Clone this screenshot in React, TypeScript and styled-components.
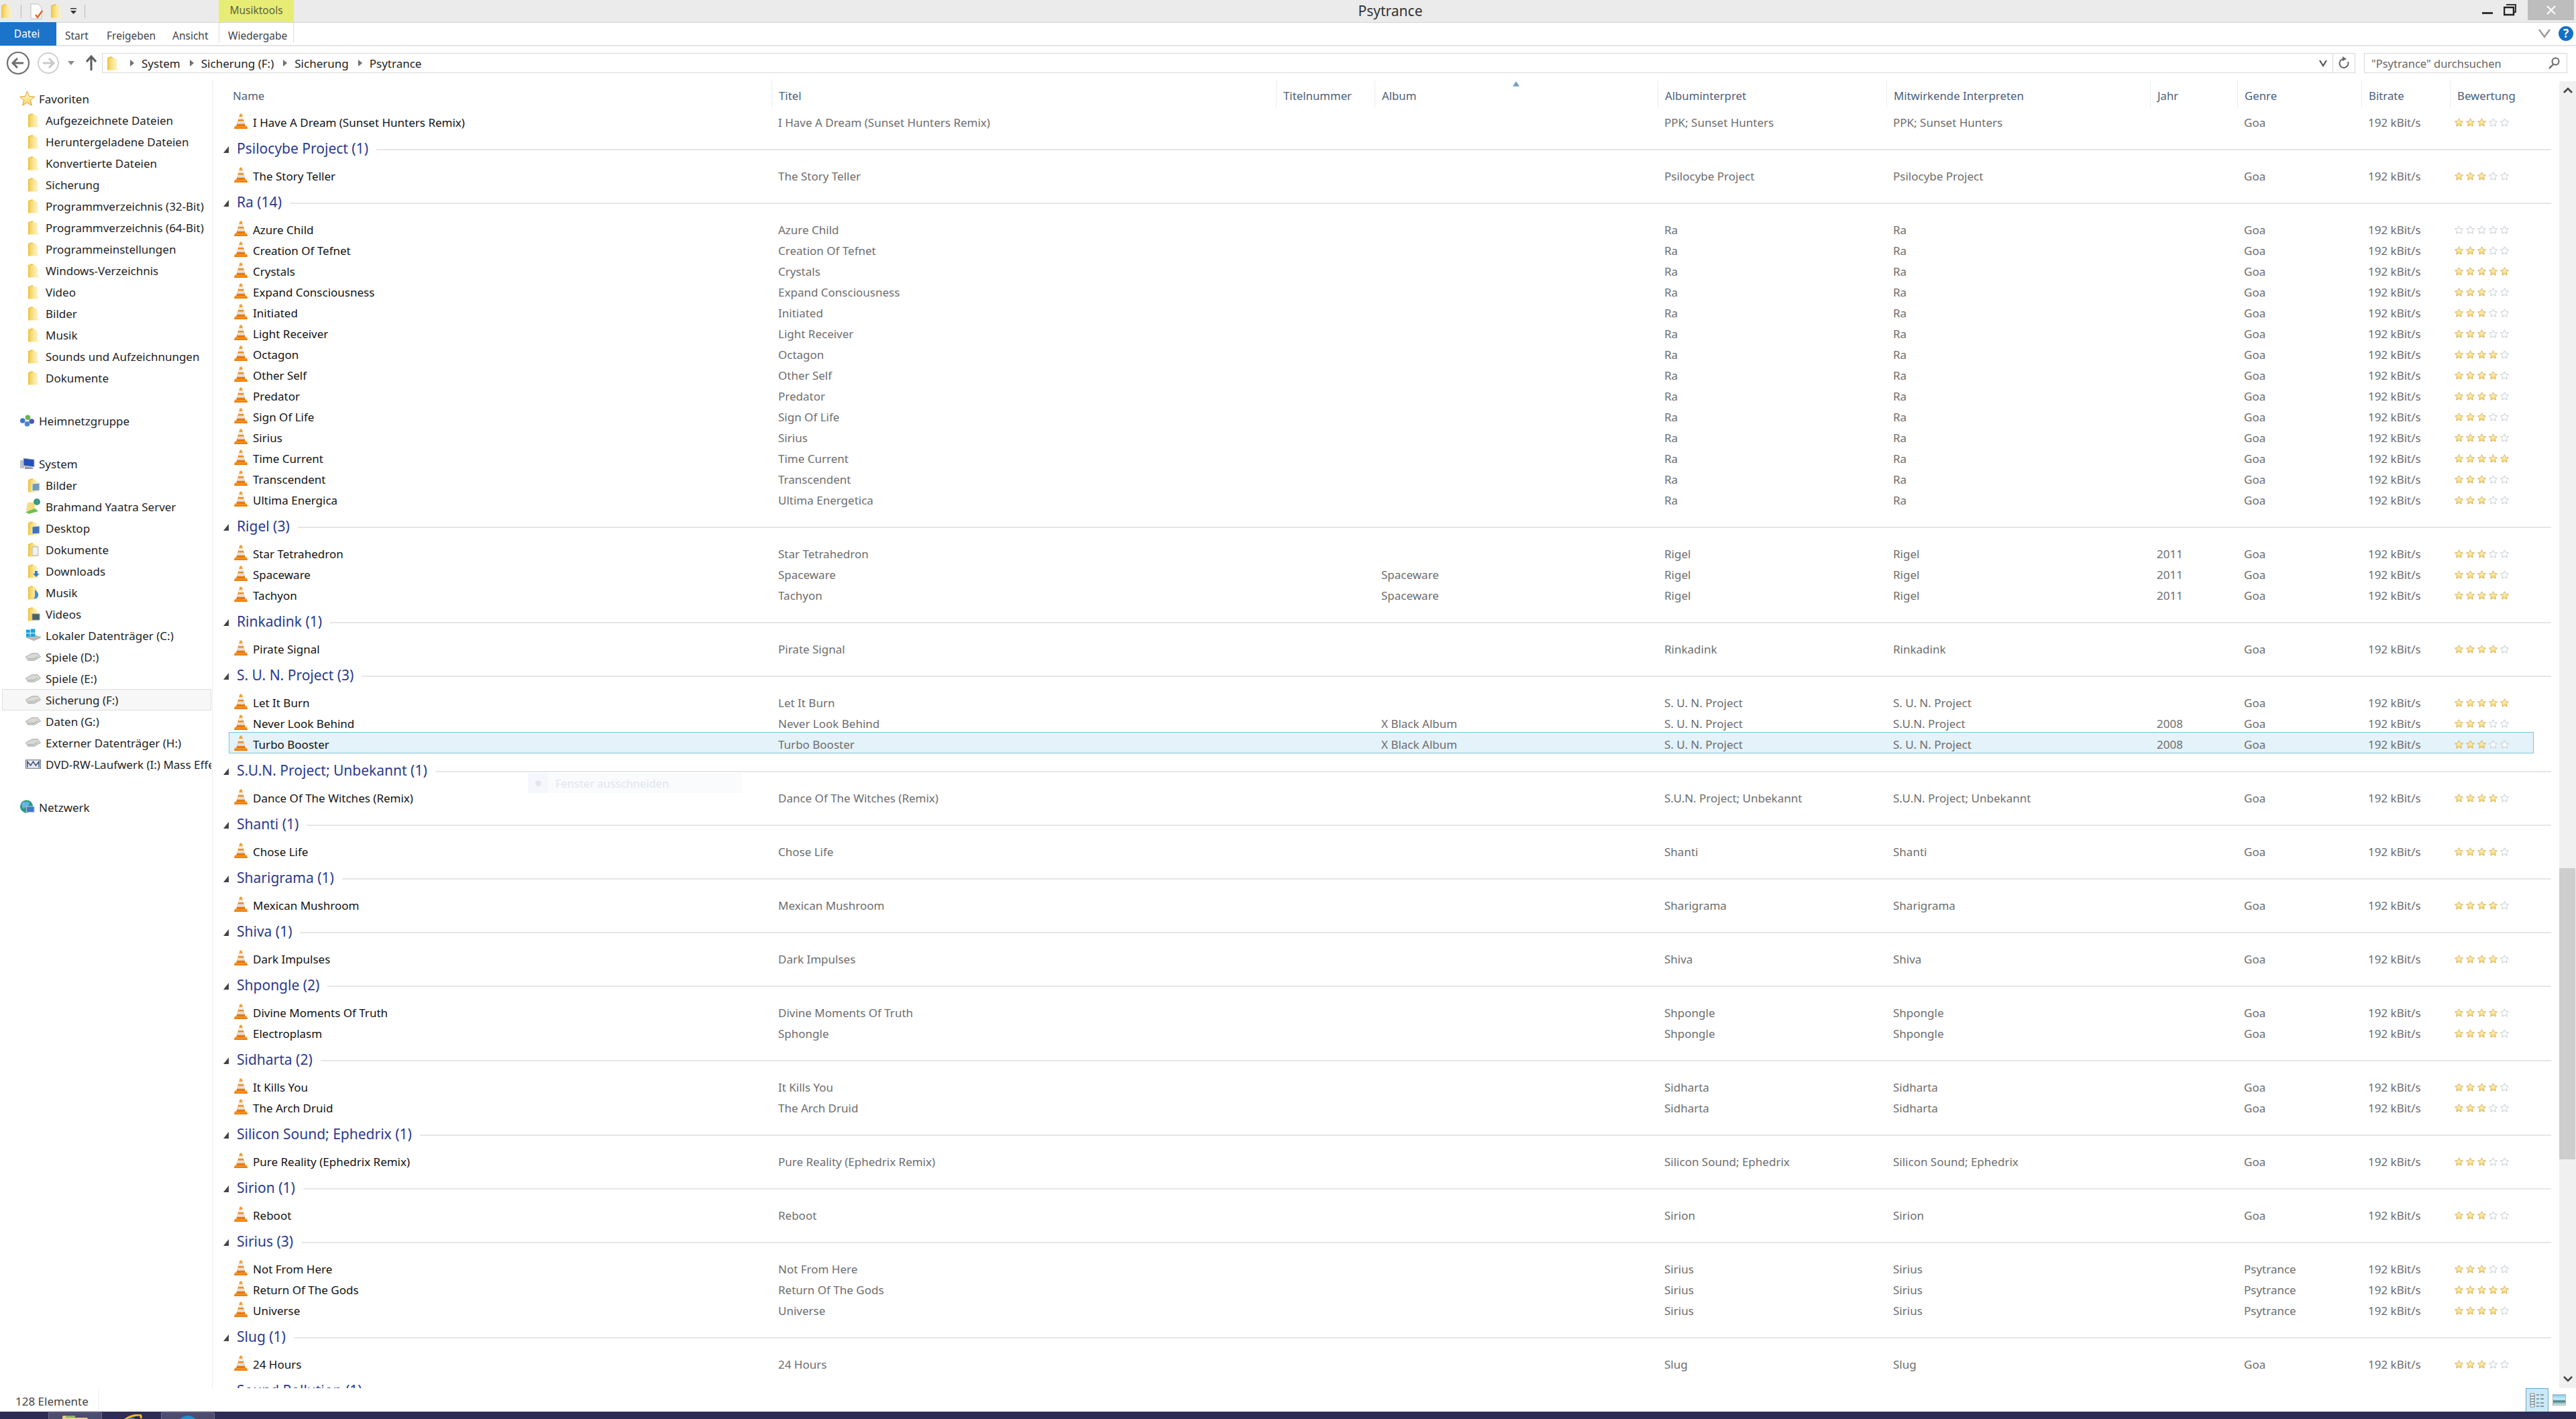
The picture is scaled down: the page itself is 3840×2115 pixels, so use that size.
import React from "react";
import styled, { createGlobalStyle } from "styled-components";

type Track = {
  name: string;
  title?: string;
  album?: string;
  artist: string;
  contrib?: string;
  year?: string;
  genre?: string;
  rating: number;
};
type Group = { label?: string; tracks: Track[] };

const t = (name: string, artist: string, rating: number, extra: Partial<Track> = {}): Track => ({
  name,
  artist,
  rating,
  ...extra,
});

const GROUPS: Group[] = [
  { tracks: [t("I Have A Dream (Sunset Hunters Remix)", "PPK; Sunset Hunters", 3)] },
  { label: "Psilocybe Project (1)", tracks: [t("The Story Teller", "Psilocybe Project", 3)] },
  {
    label: "Ra (14)",
    tracks: [
      t("Azure Child", "Ra", 0),
      t("Creation Of Tefnet", "Ra", 3),
      t("Crystals", "Ra", 5),
      t("Expand Consciousness", "Ra", 3),
      t("Initiated", "Ra", 3),
      t("Light Receiver", "Ra", 3),
      t("Octagon", "Ra", 4),
      t("Other Self", "Ra", 4),
      t("Predator", "Ra", 4),
      t("Sign Of Life", "Ra", 3),
      t("Sirius", "Ra", 4),
      t("Time Current", "Ra", 5),
      t("Transcendent", "Ra", 3),
      t("Ultima Energica", "Ra", 3, { title: "Ultima Energetica" }),
    ],
  },
  {
    label: "Rigel (3)",
    tracks: [
      t("Star Tetrahedron", "Rigel", 3, { year: "2011" }),
      t("Spaceware", "Rigel", 4, { year: "2011", album: "Spaceware" }),
      t("Tachyon", "Rigel", 5, { year: "2011", album: "Spaceware" }),
    ],
  },
  { label: "Rinkadink (1)", tracks: [t("Pirate Signal", "Rinkadink", 4)] },
  {
    label: "S. U. N. Project (3)",
    tracks: [
      t("Let It Burn", "S. U. N. Project", 5),
      t("Never Look Behind", "S. U. N. Project", 3, {
        contrib: "S.U.N. Project",
        album: "X Black Album",
        year: "2008",
      }),
      t("Turbo Booster", "S. U. N. Project", 3, { album: "X Black Album", year: "2008" }),
    ],
  },
  {
    label: "S.U.N. Project; Unbekannt (1)",
    tracks: [t("Dance Of The Witches (Remix)", "S.U.N. Project; Unbekannt", 4)],
  },
  { label: "Shanti (1)", tracks: [t("Chose Life", "Shanti", 4)] },
  { label: "Sharigrama (1)", tracks: [t("Mexican Mushroom", "Sharigrama", 4)] },
  { label: "Shiva (1)", tracks: [t("Dark Impulses", "Shiva", 4)] },
  {
    label: "Shpongle (2)",
    tracks: [
      t("Divine Moments Of Truth", "Shpongle", 4),
      t("Electroplasm", "Shpongle", 4, { title: "Sphongle" }),
    ],
  },
  {
    label: "Sidharta (2)",
    tracks: [t("It Kills You", "Sidharta", 4), t("The Arch Druid", "Sidharta", 3)],
  },
  {
    label: "Silicon Sound; Ephedrix (1)",
    tracks: [t("Pure Reality (Ephedrix Remix)", "Silicon Sound; Ephedrix", 3)],
  },
  { label: "Sirion (1)", tracks: [t("Reboot", "Sirion", 3)] },
  {
    label: "Sirius (3)",
    tracks: [
      t("Not From Here", "Sirius", 3, { genre: "Psytrance" }),
      t("Return Of The Gods", "Sirius", 5, { genre: "Psytrance" }),
      t("Universe", "Sirius", 4, { genre: "Psytrance" }),
    ],
  },
  { label: "Slug (1)", tracks: [t("24 Hours", "Slug", 3)] },
  { label: "Sound Pollution (1)", tracks: [] },
];

const COLUMNS = ["Name", "Titel", "Titelnummer", "Album", "Albuminterpret", "Mitwirkende Interpreten", "Jahr", "Genre", "Bitrate", "Bewertung"];
const ROW_GRID = "809px 752px 147px 422px 341px 393px 130px 185px 132px 125px";

type IconKind =
  | "folder" | "pictures" | "server" | "desktop" | "docs" | "downloads" | "music" | "videos"
  | "windrive" | "drive" | "dvd" | "star" | "homegroup" | "computer" | "network";

const FAVORITES = [
  "Aufgezeichnete Dateien",
  "Heruntergeladene Dateien",
  "Konvertierte Dateien",
  "Sicherung",
  "Programmverzeichnis (32-Bit)",
  "Programmverzeichnis (64-Bit)",
  "Programmeinstellungen",
  "Windows-Verzeichnis",
  "Video",
  "Bilder",
  "Musik",
  "Sounds und Aufzeichnungen",
  "Dokumente",
];

const SYSTEM: [string, IconKind][] = [
  ["Bilder", "pictures"],
  ["Brahmand Yaatra Server", "server"],
  ["Desktop", "desktop"],
  ["Dokumente", "docs"],
  ["Downloads", "downloads"],
  ["Musik", "music"],
  ["Videos", "videos"],
  ["Lokaler Datenträger (C:)", "windrive"],
  ["Spiele (D:)", "drive"],
  ["Spiele (E:)", "drive"],
  ["Sicherung (F:)", "drive"],
  ["Daten (G:)", "drive"],
  ["Externer Datenträger (H:)", "drive"],
  ["DVD-RW-Laufwerk (I:) Mass Effect", "dvd"],
];

const GlobalStyle = createGlobalStyle`
  html, body { margin: 0; padding: 0; background: #fff; }
  body { font-family: "Noto Sans", "Open Sans", sans-serif; font-size: 16px; }
  * { box-sizing: border-box; }
`;

const Window = styled.div`
  width: 3840px;
  height: 2115px;
  display: flex;
  flex-direction: column;
  overflow: hidden;
  position: relative;
  background: #fff;
`;

const TitleBar = styled.div`
  height: 34px;
  flex: none;
  display: flex;
  background: #ebebeb;
  border-bottom: 1px solid #d4d4d4;
`;

const QuickAccess = styled.div`
  width: 326px;
  display: flex;
  align-items: center;
`;

const QuickSep = styled.span<{ $left: number; $right: number }>`
  width: 1px;
  height: 20px;
  background: #b9b9b9;
  margin: 0 ${(p) => p.$right}px 0 ${(p) => p.$left}px;
`;

const ContextTab = styled.div`
  width: 112px;
  background: #e7ed74;
  color: #5f6340;
  font-size: 15.5px;
  text-align: center;
  line-height: 30px;
`;

const WindowTitle = styled.div`
  flex: 1;
  padding-left: 12px;
  text-align: center;
  font-size: 21px;
  line-height: 33px;
  color: #333;
`;

const Controls = styled.div`
  width: 145px;
  display: flex;
  align-items: flex-start;
`;

const CloseButton = styled.div`
  width: 69px;
  height: 30px;
  margin-left: auto;
  margin-right: 3px;
  background: #bdbdbd;
  display: flex;
  align-items: center;
  justify-content: center;
`;

const RibbonTabs = styled.div`
  height: 35px;
  flex: none;
  display: flex;
  align-items: flex-start;
  background: #fff;
  border-bottom: 2px solid #e4e4e4;
`;

const FileTab = styled.div`
  width: 84px;
  height: 35px;
  margin-top: -1px;
  background: #1b74c9;
  color: #fff;
  font-size: 15.5px;
  line-height: 35px;
  text-align: center;
  padding-right: 4px;
`;

const Tab = styled.div<{ $width: number; $context?: boolean }>`
  width: ${(p) => p.$width}px;
  height: 30px;
  line-height: 38px;
  font-size: 15.5px;
  color: #444;
  ${(p) => p.$context && "border-left: 1px solid #dcdcdc; border-right: 1px solid #dcdcdc; padding-left: 13px;"}
`;

const RibbonRight = styled.div`
  margin-left: auto;
  margin-right: 4px;
  margin-top: 5px;
  display: flex;
  align-items: center;
  gap: 12px;
`;

const AddressRow = styled.div`
  height: 51px;
  flex: none;
  display: flex;
  align-items: flex-start;
  padding: 10px 13px 0 0;
`;

const NavButtons = styled.div`
  width: 152px;
  height: 30px;
  flex: none;
  display: flex;
  align-items: center;
`;

const AddressBox = styled.div`
  flex: 1;
  height: 30px;
  display: flex;
  align-items: center;
  border: 1px solid #d9d9d9;
  margin-right: 13px;
  padding-left: 5px;
  font-size: 17px;
  color: #222;
`;

const Crumb = styled.span`
  white-space: nowrap;
  line-height: 27px;
`;

const CrumbArrow = styled.span<{ $first?: boolean }>`
  width: 0;
  height: 0;
  flex: none;
  border-left: 6px solid #707070;
  border-top: 5px solid transparent;
  border-bottom: 5px solid transparent;
  margin: 0 11px 0 ${(p) => (p.$first ? 16 : 14)}px;
`;

const AddressEnd = styled.div`
  margin-left: auto;
  display: flex;
  align-items: center;
  height: 100%;
`;

const Refresh = styled.div`
  width: 33px;
  height: 100%;
  border-left: 1px solid #d9d9d9;
  margin-left: 8px;
  display: flex;
  align-items: center;
  justify-content: center;
`;

const SearchBox = styled.div`
  width: 303px;
  height: 30px;
  flex: none;
  display: flex;
  align-items: center;
  justify-content: space-between;
  padding: 0 10px 0 10px;
  border: 1px solid #d9d9d9;
  color: #666;
  font-size: 16.5px;
`;

const Main = styled.div`
  flex: 1;
  min-height: 0;
  display: flex;
`;

const Nav = styled.nav`
  width: 317px;
  flex: none;
  border-right: 1px solid #eeeeee;
  padding-top: 11px;
  overflow: hidden;
`;

const NavHead = styled.div<{ $gap?: boolean }>`
  height: 32px;
  margin-top: ${(p) => (p.$gap ? 32 : 0)}px;
  display: flex;
  align-items: center;
  padding-left: 29px;
  gap: 6px;
  font-size: 17px;
  color: #1e1e1e;
`;

const NavItem = styled.div<{ $hover?: boolean }>`
  height: 32px;
  width: 312px;
  margin-left: 3px;
  display: flex;
  align-items: center;
  padding-left: 35px;
  gap: 7px;
  font-size: 17px;
  color: #1e1e1e;
  white-space: nowrap;
  overflow: hidden;
  ${(p) => p.$hover && "background: #f7f7f7; outline: 1px solid #dedede; outline-offset: -1px;"}
`;

const NavIconBox = styled.span`
  width: 23px;
  height: 24px;
  flex: none;
  display: flex;
  align-items: center;
  justify-content: center;
`;

const Content = styled.div`
  flex: 1;
  min-width: 0;
  display: flex;
  flex-direction: column;
  overflow: hidden;
  position: relative;
`;

const HeaderRow = styled.div`
  height: 40px;
  flex: none;
  display: grid;
  grid-template-columns: 813px 752px 147px 422px 341px 393px 130px 185px 132px 130px;
  margin-left: 20px;
`;

const HeaderCell = styled.div<{ $first?: boolean }>`
  position: relative;
  padding: 6px 0 0 ${(p) => (p.$first ? 9 : 10)}px;
  border-left: 1px solid ${(p) => (p.$first ? "transparent" : "#ececec")};
  font-size: 16.8px;
  line-height: 34px;
  color: #4c607a;
  white-space: nowrap;
`;

const SortMark = styled.svg`
  position: absolute;
  top: 1px;
  left: 205px;
`;

const List = styled.div`
  padding: 5px 0 0 24px;
  flex: 1;
  min-height: 0;
  overflow: hidden;
`;

const GroupHead = styled.div`
  height: 49px;
  padding-top: 4px;
  margin-left: -8px;
  margin-right: 12px;
  display: flex;
  align-items: center;
`;

const GroupLabel = styled.span`
  margin: 0 0 3px 12px;
  font-size: 21px;
  color: #2b3a8e;
  white-space: nowrap;
`;

const GroupLine = styled.span`
  flex: 1;
  height: 2px;
  margin-left: 12px;
  background: #e6e6e6;
`;

const Row = styled.div<{ $selected?: boolean }>`
  height: 31px;
  width: 3436px;
  padding-top: 4px;
  display: grid;
  grid-template-columns: ${ROW_GRID};
  align-items: center;
  font-size: 17px;
  color: #6d6d6d;
  white-space: nowrap;
  ${(p) =>
    p.$selected &&
    `background: #e4f2fa;
     box-shadow: inset 1px 0 0 #7fc3db, inset -1px 0 0 #7fc3db, inset 0 -1px 0 #7fc3db, 0 -1px 0 #7fc3db;`}
`;

const NameCell = styled.div`
  display: flex;
  align-items: center;
  gap: 8px;
  padding-left: 8px;
  color: #111;
`;

const Cell = styled.div`
  padding-left: 10px;
`;

const Stars = styled.svg`
  display: block;
  margin-left: 7px;
`;

const GhostTip = styled.div`
  position: absolute;
  left: 470px;
  top: 1032px;
  width: 319px;
  height: 30px;
  background: #f9fbfd;
  display: flex;
  align-items: center;
  font-size: 16.5px;
  color: #e0e5ec;
`;

const GhostDot = styled.span`
  width: 30px;
  height: 100%;
  margin-right: 11px;
  background: #f4f7fb;
  display: flex;
  align-items: center;
  justify-content: center;
  &::after {
    content: "";
    width: 9px;
    height: 9px;
    border-radius: 50%;
    background: #e3e8ef;
  }
`;

const ScrollBar = styled.div`
  width: 25px;
  flex: none;
  margin-top: 1px;
  display: flex;
  flex-direction: column;
  background: #f0f0f0;
`;

const ScrollArrow = styled.div<{ $down?: boolean }>`
  height: 28px;
  flex: none;
  margin-top: ${(p) => (p.$down ? "auto" : "0")};
  display: flex;
  align-items: center;
  justify-content: center;
`;

const ScrollThumb = styled.div`
  width: 24px;
  height: 434px;
  flex: none;
  margin-top: 1145px;
  background: #cdcdcd;
`;

const StatusBar = styled.div`
  height: 35px;
  flex: none;
  display: flex;
  align-items: center;
  padding-right: 15px;
  font-size: 17px;
  color: #444;
`;

const StatusText = styled.div`
  width: 147px;
  padding: 4px 0 0 23px;
  border-right: 1px solid #efefef;
  line-height: 28px;
  white-space: nowrap;
`;

const ViewButton = styled.div`
  width: 34px;
  height: 35px;
  margin-left: auto;
  display: flex;
  align-items: center;
  justify-content: center;
  background: #cbe8f6;
  border: 1px solid #68a8ca;
  border-bottom: 0;
`;

const ThumbView = styled.div`
  width: 20px;
  height: 17px;
  margin-left: 6px;
  border: 1px solid #b5b5b5;
  background: linear-gradient(#7fc9ea 0%, #d5eef8 45%, #3d7f85 62%, #dfeef0 100%);
`;

const TaskBar = styled.div`
  height: 11px;
  flex: none;
  display: flex;
  background: #2e2b56;
  overflow: hidden;
  padding-top: 1px;
`;

const TaskButton = styled.div<{ $active?: boolean }>`
  width: 80px;
  height: 14px;
  flex: none;
  display: flex;
  justify-content: center;
  padding-top: 3px;
  ${(p) => p.$active && "background: #4d4b70; border: 1px solid #6f6d8c;"}
`;

const StartSlot = styled.div`
  width: 72px;
  flex: none;
  padding: 7px 0 0 28px;
`;

const Gap = styled.div<{ $width: number }>`
  width: ${(p) => p.$width}px;
  flex: none;
  display: flex;
  justify-content: center;
  padding-top: 3px;
`;

const Defs = () => (
  <svg width="0" height="0" style={{ position: "absolute" }}>
    <defs>
      <linearGradient id="folderFill" x1="0" y1="0" x2="1" y2="0">
        <stop offset="0" stopColor="#f3d25c" />
        <stop offset="0.5" stopColor="#fbe9a4" />
        <stop offset="1" stopColor="#fdf5d0" />
      </linearGradient>
      <linearGradient id="starOn" x1="0" y1="0" x2="0" y2="1">
        <stop offset="0" stopColor="#fffbe0" />
        <stop offset="1" stopColor="#f8d45c" />
      </linearGradient>
      <linearGradient id="coneFill" x1="0" y1="0" x2="0" y2="1">
        <stop offset="0" stopColor="#f9a52c" />
        <stop offset="1" stopColor="#e9720a" />
      </linearGradient>
    </defs>
  </svg>
);

const Cone = () => (
  <svg width="20" height="23" viewBox="0 0 20 23" style={{ marginTop: -4 }}>
    <path d="M1.2 18.5h17.6l1.2 3.6q0 1-1 1H1q-1 0-1-1z" fill="url(#coneFill)" />
    <path d="M8.6.4h2.8L16.8 19H3.2z" fill="url(#coneFill)" />
    <path d="M7.3 5h5.4l1.1 3.9H6.2z" fill="#ececec" />
    <path d="M5.4 11.5h9.2l1.2 4.2H4.2z" fill="#e4dfd8" />
  </svg>
);

const FolderGlyph = () => (
  <svg width="20" height="23" viewBox="0 0 20 23">
    <path d="M2 3l6-2 2 2v16l-8 3z" fill="#eec446" />
    <path d="M4 4l7-1.500 5 3v13l3 2-3 1H4z" fill="url(#folderFill)" />
  </svg>
);

const NavIcon = ({ kind }: { kind: IconKind }) => {
  switch (kind) {
    case "star":
      return (
        <svg width="23" height="24" viewBox="0 0 23 24">
          <path d="M11.5 1l3 7.6 8 .6-6.2 5.1 2 7.9-6.8-4.4-6.8 4.4 2-7.9L.5 9.2l8-.6z" fill="url(#starOn)" stroke="#e59a22" />
        </svg>
      );
    case "homegroup":
      return (
        <svg width="23" height="20" viewBox="0 0 24 20">
          <circle cx="5" cy="10" r="4" fill="#3f76c8" />
          <circle cx="13" cy="5" r="4" fill="#6cb34a" />
          <circle cx="19" cy="11" r="4" fill="#4c55c0" />
          <circle cx="12" cy="15" r="4" fill="#4a86d8" />
        </svg>
      );
    case "computer":
      return (
        <svg width="22" height="18" viewBox="0 0 22 18">
          <rect x="0" y="4" width="6" height="12" fill="#b9c0c9" />
          <path d="M5 1l16 2v11L5 12z" fill="#234fb8" stroke="#b6bcc4" />
          <path d="M7 13l12 2v2H7z" fill="#8a94a3" />
        </svg>
      );
    case "network":
      return (
        <svg width="23" height="24" viewBox="0 0 24 24">
          <circle cx="11" cy="11" r="10" fill="#2f9a84" />
          <path d="M3 6q6-4 13-1l-3 6-8 3z" fill="#69b4e6" />
          <rect x="11" y="11" width="12" height="9" fill="#3d78cc" stroke="#c9ced6" />
        </svg>
      );
    case "server":
      return (
        <svg width="23" height="24" viewBox="0 0 23 24">
          <path d="M3 6h11v12H1z" fill="#f4dc85" />
          <circle cx="17" cy="5" r="5" fill="#3e9a82" />
          <path d="M0 20l14-5 5 4-14 4z" fill="#6cc04f" />
        </svg>
      );
    case "windrive":
      return (
        <svg width="24" height="20" viewBox="0 0 24 20">
          <path d="M1 13l11-4 12 4-11 5z" fill="#b9bfb8" stroke="#7f8a80" strokeWidth=".6" />
          <path d="M1 1h6v5H1zM8 0h7v6H8zM1 7h6v5H1zM8 7h7v5H8z" fill="#10a5e8" />
        </svg>
      );
    case "drive":
      return (
        <svg width="24" height="14" viewBox="0 0 24 14">
          <path d="M.5 7L10 1.500h9L23.500 7 14 12.500H4z" fill="#d6d9d4" stroke="#8f968f" strokeWidth=".8" />
          <path d="M4 10l9 0 6-3.500" fill="none" stroke="#9ea59c" />
        </svg>
      );
    case "dvd":
      return (
        <svg width="24" height="14" viewBox="0 0 24 14">
          <rect x=".5" y=".5" width="23" height="13" fill="#e8ebf0" stroke="#5a6270" />
          <path d="M3 12V3l5 6 4-6 4 6 5-6v9" fill="none" stroke="#37507f" strokeWidth="1.600" />
        </svg>
      );
    default:
      break;
  }
  const overlay: Record<string, React.ReactNode> = {
    pictures: <path d="M8 9l11-1v11l-11 1z" fill="#6f9fb4" stroke="#e8ecef" />,
    desktop: <path d="M8 9l11-1v11l-11 1z" fill="#3d74bd" stroke="#d9dfe6" />,
    docs: <path d="M8 7h9v13H8z" fill="#f0f0ec" stroke="#b4b4ac" />,
    downloads: <path d="M12 11h4v4h3l-5 5-5-5h3z" fill="#2f82d6" />,
    music: <path d="M12 7q6 4 5 9t-7 4q3-3 2-6z" fill="#3a8fd8" />,
    videos: <path d="M8 11h11v9H8z" fill="#47606a" stroke="#8a9aa3" />,
  };
  return (
    <svg width="20" height="23" viewBox="0 0 20 23">
      <path d="M2 3l6-2 2 2v16l-8 3z" fill="#eec446" />
      <path d="M4 4l7-1.500 5 3v13l3 2-3 1H4z" fill="url(#folderFill)" />
      {overlay[kind]}
    </svg>
  );
};

const STAR = "M6.5.7L8.32 4.49 12.5 5.05 9.45 7.96 10.2 12.1 6.5 10.1 2.8 12.1 3.55 7.96.5 5.05 4.68 4.49z";

const Rating = ({ value }: { value: number }) => (
  <Stars width="82" height="14" viewBox="0 0 82 14">
    {[0, 1, 2, 3, 4].map((i) => (
      <path
        key={i}
        d={STAR}
        transform={`translate(${i * 17} 0)`}
        fill={i < value ? "url(#starOn)" : "#fff"}
        stroke={i < value ? "#d4ae5c" : "#c4c9d0"}
        strokeWidth="1"
      />
    ))}
  </Stars>
);

const TrackRow = ({ track, selected }: { track: Track; selected: boolean }) => (
  <Row $selected={selected}>
    <NameCell>
      <Cone />
      {track.name}
    </NameCell>
    <Cell>{track.title ?? track.name}</Cell>
    <Cell />
    <Cell>{track.album}</Cell>
    <Cell>{track.artist}</Cell>
    <Cell>{track.contrib ?? track.artist}</Cell>
    <Cell>{track.year}</Cell>
    <Cell>{track.genre ?? "Goa"}</Cell>
    <Cell>192 kBit/s</Cell>
    <Rating value={track.rating} />
  </Row>
);

const App: React.FC = () => {
  return (
    <Window>
      <GlobalStyle />
      <Defs />
      <TitleBar>
        <QuickAccess>
          <FolderGlyph />
          <QuickSep $left={11} $right={13} />
          <svg width="20" height="24" viewBox="0 0 20 24">
            <path d="M1 1h11l5 5v17H1z" fill="#fff" stroke="#bdbdbd" />
            <path d="M8 17l3 4 7-10" fill="none" stroke="#e0632a" strokeWidth="2.400" />
          </svg>
          <span style={{ width: 9 }} />
          <FolderGlyph />
          <svg width="14" height="14" viewBox="0 0 14 14" style={{ marginLeft: 9 }}>
            <path d="M2 2h9v1.600H2zM2 6h9l-4.500 5z" fill="#333" />
          </svg>
          <QuickSep $left={9} $right={0} />
        </QuickAccess>
        <ContextTab>Musiktools</ContextTab>
        <WindowTitle>Psytrance</WindowTitle>
        <Controls>
          <svg width="16" height="30" viewBox="0 0 16 30" style={{ marginLeft: 5 }}>
            <rect y="18" width="16" height="3" fill="#333" />
          </svg>
          <svg width="19" height="30" viewBox="0 0 19 30" style={{ marginLeft: 16 }}>
            <path d="M5 8V7h13v11h-3" fill="none" stroke="#333" strokeWidth="2" />
            <rect x="1" y="11" width="14" height="11" fill="none" stroke="#222" strokeWidth="2.500" />
          </svg>
          <CloseButton>
            <svg width="14" height="14" viewBox="0 0 14 14">
              <path d="M1 1l12 12M13 1L1 13" stroke="#fff" strokeWidth="2" />
            </svg>
          </CloseButton>
        </Controls>
      </TitleBar>

      <RibbonTabs>
        <FileTab>Datei</FileTab>
        <Tab $width={13} />
        <Tab $width={62}>Start</Tab>
        <Tab $width={98}>Freigeben</Tab>
        <Tab $width={69}>Ansicht</Tab>
        <Tab $width={112} $context>
          Wiedergabe
        </Tab>
        <RibbonRight>
          <svg width="18" height="14" viewBox="0 0 18 14">
            <path d="M1 1l8 11 8-11" fill="none" stroke="#9a9a9a" strokeWidth="2.500" />
          </svg>
          <svg width="22" height="22" viewBox="0 0 22 22">
            <circle cx="11" cy="11" r="11" fill="#1170c8" />
            <text x="11" y="17" textAnchor="middle" fontSize="17" fontWeight="700" fill="#fff" fontFamily="Noto Sans">
              ?
            </text>
          </svg>
        </RibbonRight>
      </RibbonTabs>

      <AddressRow>
        <NavButtons>
          <svg width="36" height="36" viewBox="0 0 36 36" style={{ marginLeft: 9, flex: "none" }}>
            <circle cx="18" cy="18" r="16" fill="#fff" stroke="#6e6e6e" strokeWidth="2.200" />
            <path d="M26 18H11M17 11l-7 7 7 7" fill="none" stroke="#6e6e6e" strokeWidth="3" />
          </svg>
          <svg width="34" height="36" viewBox="0 0 34 36" style={{ marginLeft: 10, flex: "none" }}>
            <circle cx="17" cy="18" r="15" fill="#fff" stroke="#cfcfcf" strokeWidth="2" />
            <path d="M9 18h15M18 11l7 7-7 7" fill="none" stroke="#c9c9c9" strokeWidth="3" />
          </svg>
          <svg width="10" height="6" viewBox="0 0 10 6" style={{ marginLeft: 12, flex: "none" }}>
            <path d="M0 0h10L5 6z" fill="#888" />
          </svg>
          <svg width="16" height="26" viewBox="0 0 16 26" style={{ marginLeft: 17, flex: "none" }}>
            <path d="M8 24V3M1 11l7-8 7 8" fill="none" stroke="#5e5e5e" strokeWidth="3" />
          </svg>
        </NavButtons>
        <AddressBox>
          <FolderGlyph />
          <CrumbArrow $first />
          <Crumb>System</Crumb>
          <CrumbArrow />
          <Crumb>Sicherung (F:)</Crumb>
          <CrumbArrow />
          <Crumb>Sicherung</Crumb>
          <CrumbArrow />
          <Crumb>Psytrance</Crumb>
          <AddressEnd>
            <svg width="12" height="12" viewBox="0 0 12 12">
              <path d="M1 2l5 8 5-8" fill="none" stroke="#555" strokeWidth="2.200" />
            </svg>
            <Refresh>
              <svg width="16" height="20" viewBox="0 0 16 20">
                <path d="M9 4a6.500 6.500 0 1 0 5 4" fill="none" stroke="#666" strokeWidth="2" />
                <path d="M6 0l6 4-6 3z" fill="#666" />
              </svg>
            </Refresh>
          </AddressEnd>
        </AddressBox>
        <SearchBox>
          "Psytrance" durchsuchen
          <svg width="17" height="18" viewBox="0 0 17 18">
            <circle cx="10.500" cy="6.500" r="5" fill="none" stroke="#666" strokeWidth="2" />
            <path d="M7 11l-6 6" stroke="#666" strokeWidth="2.400" />
          </svg>
        </SearchBox>
      </AddressRow>

      <Main>
        <Nav>
          <NavHead>
            <NavIconBox>
              <NavIcon kind="star" />
            </NavIconBox>
            Favoriten
          </NavHead>
          {FAVORITES.map((label) => (
            <NavItem key={label}>
              <NavIconBox>
                <NavIcon kind="folder" />
              </NavIconBox>
              {label}
            </NavItem>
          ))}
          <NavHead $gap>
            <NavIconBox>
              <NavIcon kind="homegroup" />
            </NavIconBox>
            Heimnetzgruppe
          </NavHead>
          <NavHead $gap>
            <NavIconBox>
              <NavIcon kind="computer" />
            </NavIconBox>
            System
          </NavHead>
          {SYSTEM.map(([label, kind]) => (
            <NavItem key={label} $hover={label === "Sicherung (F:)"}>
              <NavIconBox>
                <NavIcon kind={kind} />
              </NavIconBox>
              {label}
            </NavItem>
          ))}
          <NavHead $gap>
            <NavIconBox>
              <NavIcon kind="network" />
            </NavIconBox>
            Netzwerk
          </NavHead>
        </Nav>

        <Content>
          <HeaderRow>
            {COLUMNS.map((c, i) => (
              <HeaderCell key={c} $first={i === 0}>
                {c}
                {c === "Album" && (
                  <SortMark width="10" height="8" viewBox="0 0 12 9">
                    <path d="M6 0l6 9H0z" fill="#6f9fc2" />
                  </SortMark>
                )}
              </HeaderCell>
            ))}
          </HeaderRow>
          <List>
            {GROUPS.map((g, gi) => (
              <React.Fragment key={gi}>
                {g.label && (
                  <GroupHead>
                    <svg width="8" height="10" viewBox="0 0 8 10" style={{ flex: "none" }}>
                      <path d="M8 0v10H0z" fill="#444" />
                    </svg>
                    <GroupLabel>{g.label}</GroupLabel>
                    <GroupLine />
                  </GroupHead>
                )}
                {g.tracks.map((tr) => (
                  <TrackRow key={tr.name} track={tr} selected={tr.name === "Turbo Booster"} />
                ))}
              </React.Fragment>
            ))}
          </List>
          <GhostTip>
            <GhostDot />
            Fenster ausschneiden
          </GhostTip>
        </Content>

        <ScrollBar>
          <ScrollArrow>
            <svg width="14" height="10" viewBox="0 0 14 10">
              <path d="M1 8l6-6 6 6" fill="none" stroke="#444" strokeWidth="2.600" />
            </svg>
          </ScrollArrow>
          <ScrollThumb />
          <ScrollArrow $down>
            <svg width="14" height="10" viewBox="0 0 14 10">
              <path d="M1 2l6 6 6-6" fill="none" stroke="#444" strokeWidth="2.600" />
            </svg>
          </ScrollArrow>
        </ScrollBar>
      </Main>

      <StatusBar>
        <StatusText>128 Elemente</StatusText>
        <ViewButton>
          <svg width="22" height="22" viewBox="0 0 22 22">
            <path d="M1 1h6v20H1z" fill="#f4f8fb" stroke="#7d8a96" />
            <path d="M1 5h6M1 9h6M1 13h6M1 17h6M10 3h4M16 3h5M10 9h4M16 9h5M10 15h4M16 15h5M10 20h4M16 20h5" stroke="#3d4a57" />
          </svg>
        </ViewButton>
        <ThumbView />
      </StatusBar>

      <TaskBar>
        <StartSlot>
          <svg width="28" height="14" viewBox="0 0 28 14">
            <path d="M0 5L28 0v14H0z" fill="#f4f4f6" />
          </svg>
        </StartSlot>
        <TaskButton $active>
          <svg width="40" height="12" viewBox="0 0 40 12">
            <path d="M1 12V3q0-2 2-2h12l3 3h19q2 0 2 2v6z" fill="#e6cf7e" />
            <path d="M6 1h14v3H6z" fill="#8fb36b" />
          </svg>
        </TaskButton>
        <Gap $width={88}>
          <svg width="32" height="12" viewBox="0 0 32 12">
            <path d="M2 12Q12 1 28 1q3 0 2 5" fill="none" stroke="#f2b91e" strokeWidth="3" />
            <circle cx="16" cy="14" r="9" fill="#2b8fd8" />
          </svg>
        </Gap>
        <TaskButton $active>
          <svg width="34" height="12" viewBox="0 0 34 12">
            <circle cx="17" cy="17" r="16" fill="#1f8fd0" />
          </svg>
        </TaskButton>
      </TaskBar>
    </Window>
  );
};

export default App;
